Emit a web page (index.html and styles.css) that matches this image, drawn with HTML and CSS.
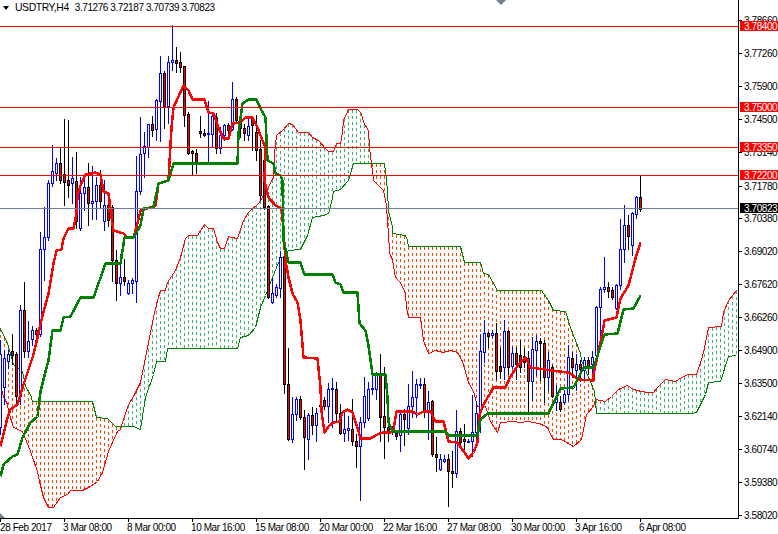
FILE: index.html
```html
<!DOCTYPE html>
<html lang="en">
<head>
<meta charset="utf-8">
<title>USDTRY,H4</title>
<link rel="stylesheet" href="styles.css">
</head>
<body>
<div class="terminal">
  <div class="plot">
    <svg id="chart" class="chart-svg" width="738" height="518" viewBox="0 0 738 518" aria-label="USDTRY H4 chart"></svg>
    <div class="legend">
      <span class="legend-arrow"></span>
      <span class="legend-symbol">USDTRY,H4</span>
      <span class="legend-ohlc">3.71276 3.72187 3.70739 3.70823</span>
    </div>
    <span class="shift-marker"></span>
    <span class="corner-marker"></span>
  </div>
  <svg class="price-axis" width="40" height="518" viewBox="738 0 40 518">
    <path class="axis-line" d="M738.5 0V518.5"/>
    <path class="axis-line" d="M739 20.5h3M739 53.5h3M739 86.5h3M739 119.5h3M739 152.5h3M739 186.5h3M739 218.5h3M739 251.5h3M739 284.5h3M739 317.5h3M739 350.5h3M739 383.5h3M739 416.5h3M739 449.5h3M739 482.5h3M739 515.5h3"/>
    <g class="axis-text">
      <text x="744" y="24">3.78660</text>
      <text x="744" y="57">3.77260</text>
      <text x="744" y="90">3.75900</text>
      <text x="744" y="123">3.74500</text>
      <text x="744" y="156">3.73140</text>
      <text x="744" y="190">3.71780</text>
      <text x="744" y="222">3.70380</text>
      <text x="744" y="255">3.69020</text>
      <text x="744" y="288">3.67620</text>
      <text x="744" y="321">3.66260</text>
      <text x="744" y="354">3.64900</text>
      <text x="744" y="387">3.63500</text>
      <text x="744" y="420">3.62140</text>
      <text x="744" y="453">3.60740</text>
      <text x="744" y="486">3.59380</text>
      <text x="744" y="519">3.58020</text>
    </g>
    <rect class="tag-red" x="740" y="21" width="38" height="10"/>
    <rect class="tag-red" x="740" y="102" width="38" height="10"/>
    <rect class="tag-red" x="740" y="142" width="38" height="10"/>
    <rect class="tag-red" x="740" y="170" width="38" height="10"/>
    <rect class="tag-black" x="740" y="203" width="38" height="10"/>
    <g class="tag-text">
      <text x="744" y="30">3.78400</text>
      <text x="744" y="111">3.75000</text>
      <text x="744" y="151">3.73350</text>
      <text x="744" y="179">3.72200</text>
      <text x="744" y="212">3.70823</text>
    </g>
  </svg>
  <svg class="time-axis" width="778" height="16" viewBox="0 518 778 16">
    <path class="axis-line" d="M0 518.5H739M0.5 518v4M64.5 518v4M128.5 518v4M192.5 518v4M256.5 518v4M320.5 518v4M384.5 518v4M448.5 518v4M512.5 518v4M576.5 518v4M640.5 518v4"/>
    <g class="axis-text">
      <text x="0" y="531">28 Feb 2017</text>
      <text x="63" y="531">3 Mar 08:00</text>
      <text x="127" y="531">8 Mar 00:00</text>
      <text x="191" y="531">10 Mar 16:00</text>
      <text x="255" y="531">15 Mar 08:00</text>
      <text x="319" y="531">20 Mar 00:00</text>
      <text x="383" y="531">22 Mar 16:00</text>
      <text x="447" y="531">27 Mar 08:00</text>
      <text x="511" y="531">30 Mar 00:00</text>
      <text x="575" y="531">3 Apr 16:00</text>
      <text x="639" y="531">6 Apr 08:00</text>
    </g>
  </svg>
</div>
<script src="chart.js"></script>
</body>
</html>
```
FILE: styles.css
```css
html, body {
  margin: 0;
  padding: 0;
  background: #ffffff;
}

.terminal {
  display: grid;
  grid-template-columns: 738px 40px;
  grid-template-rows: 518px 16px;
  width: 778px;
  height: 534px;
  overflow: hidden;
  font-family: "Liberation Sans", Arial, sans-serif;
  font-size: 10px;
  color: #000000;
}

.plot {
  position: relative;
  width: 738px;
  height: 518px;
}

.chart-svg,
.price-axis,
.time-axis {
  display: block;
}

.price-axis {
  overflow: visible;
}

.time-axis {
  grid-column: 1 / 3;
}

.legend {
  position: absolute;
  top: 1px;
  left: 3px;
  display: flex;
  align-items: center;
  gap: 6px;
  height: 14px;
  line-height: 14px;
  font-size: 10px;
  letter-spacing: -0.42px;
  white-space: nowrap;
}

.legend-arrow {
  width: 0;
  height: 0;
  border-left: 3.5px solid transparent;
  border-right: 3.5px solid transparent;
  border-top: 4px solid #000000;
}

.legend-symbol {
  font-size: 10.4px;
  letter-spacing: -0.4px;
}

.shift-marker {
  position: absolute;
  top: 0;
  left: 496px;
  width: 0;
  height: 0;
  border-left: 5px solid transparent;
  border-right: 5px solid transparent;
  border-top: 5px solid #708090;
}

.corner-marker {
  position: absolute;
  left: 0;
  bottom: 0;
  width: 0;
  height: 0;
  border-bottom: 5px solid #708090;
  border-right: 5px solid transparent;
}

.axis-line {
  fill: none;
  stroke: #000000;
  stroke-width: 1;
  shape-rendering: crispEdges;
}

.axis-text text {
  font-family: "Liberation Sans", Arial, sans-serif;
  font-size: 10px;
  letter-spacing: -0.42px;
  fill: #000000;
}

.tag-red {
  fill: #ff0000;
}

.tag-black {
  fill: #000000;
}

.tag-text text {
  font-family: "Liberation Sans", Arial, sans-serif;
  font-size: 10px;
  letter-spacing: -0.42px;
  fill: #ffffff;
}

.wick-up { stroke: #0000ff; stroke-width: 1; fill: none; shape-rendering: crispEdges; }
.wick-down { stroke: #000000; stroke-width: 1; fill: none; shape-rendering: crispEdges; }
.body-up { stroke: #0000ff; stroke-width: 1; fill: #ffffff; shape-rendering: crispEdges; }
.body-down { stroke: #000000; stroke-width: 1; fill: #ff0000; shape-rendering: crispEdges; }

.dash-orange { stroke: #ff4500; stroke-width: 1; fill: none; shape-rendering: crispEdges; }
.dash-green { stroke: #3cb371; stroke-width: 1; fill: none; shape-rendering: crispEdges; }

.span-a { stroke: #ff0000; stroke-width: 1; fill: none; shape-rendering: crispEdges; }
.span-b { stroke: #008000; stroke-width: 1; fill: none; shape-rendering: crispEdges; }
.tenkan { stroke: #ff0000; stroke-width: 2.5; fill: none; stroke-linejoin: round; shape-rendering: crispEdges; }
.kijun { stroke: #008000; stroke-width: 2.5; fill: none; stroke-linejoin: round; shape-rendering: crispEdges; }

.level { stroke: #ff0000; stroke-width: 1; shape-rendering: crispEdges; }
.bid { stroke: #708090; stroke-width: 1; shape-rendering: crispEdges; }
```
FILE: chart.js
```js
(function () {
var NS = "http://www.w3.org/2000/svg";
var chart = document.getElementById("chart");

// x, high, body top, body bottom, low, bullish (1) or bearish (0), in screen pixels
var candles = [
[0,340,354,427,434,1],[4,350,358,387,404,1],[8,350,354,361,368,1],[12,334,351,355,364,0],[16,352,354,396,404,0],
[20,305,310,396,404,1],[24,282,310,351,357,0],[28,321,341,351,357,1],[32,326,330,339,345,1],[36,328,330,334,343,0],
[40,232,249,334,336,1],[44,207,237,249,280,1],[48,180,183,237,240,1],[52,145,171,183,186,1],[56,158,163,173,180,1],
[60,148,163,180,183,0],[64,119,174,182,205,0],[68,120,180,185,197,0],[72,157,178,183,203,1],[76,152,181,221,228,0],
[80,177,193,228,230,1],[84,177,187,193,210,1],[88,163,187,203,225,0],[92,166,201,203,219,1],[96,177,185,201,219,1],
[100,170,185,201,207,0],[104,180,205,221,230,1],[108,197,205,220,226,0],[112,205,207,260,281,0],[116,250,260,283,300,0],
[120,254,277,283,295,1],[124,259,277,281,285,0],[128,280,283,293,294,1],[132,278,280,283,293,1],[136,156,191,281,302,1],
[140,117,154,191,194,1],[144,132,146,153,177,1],[148,124,124,147,157,1],[152,116,124,130,136,0],[156,99,100,129,140,1],
[160,56,73,101,141,1],[164,71,73,106,128,0],[168,56,62,106,123,1],[172,25,60,62,70,1],[176,47,60,63,72,0],
[180,52,62,67,72,0],[184,66,66,115,126,0],[188,112,114,153,154,0],[192,150,151,153,175,0],[196,149,153,162,173,0],
[200,116,131,133,137,0],[204,129,133,135,136,0],[208,101,133,134,163,1],[212,112,116,134,147,1],[216,113,117,148,153,0],
[220,127,135,148,153,1],[224,124,125,135,140,1],[228,123,125,130,133,0],[232,82,99,129,130,1],[236,97,99,120,122,0],
[240,118,123,128,137,0],[244,124,128,133,140,0],[248,117,126,135,140,1],[252,116,117,125,150,0],[256,115,132,150,160,0],
[260,140,149,195,200,0],[264,158,160,207,209,0],[268,205,206,297,298,0],[272,278,293,302,303,1],[276,284,287,295,297,1],
[280,251,257,288,297,1],[284,255,257,384,393,0],[288,348,384,439,440,0],[292,397,414,439,442,1],[296,397,399,414,420,1],
[300,396,399,417,419,0],[304,410,417,437,469,0],[308,413,415,439,459,1],[312,407,415,425,434,0],[316,408,413,425,441,1],
[320,397,405,406,410,0],[324,397,400,406,409,0],[328,383,389,406,422,1],[332,378,388,389,427,1],[336,382,389,413,421,0],
[340,404,413,433,434,0],[344,411,429,433,441,1],[348,416,428,430,440,1],[352,399,429,441,445,0],[356,434,441,446,467,0],
[360,417,422,446,500,1],[364,377,396,422,427,1],[368,382,389,418,420,1],[372,374,388,389,394,1],[376,372,374,389,399,1],
[380,354,374,417,441,0],[384,367,416,427,458,0],[388,411,427,430,441,0],[392,426,429,431,434,1],[396,430,433,436,439,0],
[400,411,414,435,451,1],[404,409,414,419,445,0],[408,384,406,428,434,1],[412,371,397,406,417,1],[416,379,384,397,417,1],
[420,378,384,385,388,1],[424,378,384,411,417,0],[428,391,402,411,439,1],[432,400,401,454,456,0],[436,437,454,457,471,0],
[440,454,459,469,470,1],[444,455,459,461,462,1],[448,454,459,471,506,0],[452,451,471,473,487,0],[456,410,431,473,477,1],
[460,428,431,442,448,0],[464,424,439,441,451,0],[468,439,441,442,442,1],[472,395,432,441,456,1],[476,401,413,432,447,1],
[480,334,351,412,432,1],[484,320,333,352,362,1],[488,332,333,336,347,0],[492,330,333,335,337,1],[496,323,333,371,379,0],
[500,348,366,371,378,0],[504,320,331,367,379,1],[508,330,331,367,374,0],[512,347,353,366,368,1],[516,347,353,364,379,0],
[520,340,355,367,372,0],[524,348,356,362,367,0],[528,351,358,381,412,0],[532,337,349,381,400,1],[536,335,341,350,375,1],
[540,338,341,343,380,0],[544,340,343,377,402,0],[548,352,360,377,390,1],[552,365,367,396,397,0],[556,385,398,402,410,1],
[560,396,402,409,411,0],[564,390,394,402,404,1],[568,345,357,394,400,1],[572,352,358,367,377,0],[576,354,364,370,390,1],
[580,360,364,369,381,0],[584,357,360,370,379,1],[588,357,360,367,374,0],[592,351,357,364,374,1],[596,306,307,355,362,1],
[600,287,289,307,337,1],[604,257,287,289,292,1],[608,282,287,291,297,0],[612,287,290,297,299,0],[616,284,285,308,309,1],
[620,219,249,285,289,1],[624,205,225,249,262,1],[628,215,225,236,249,0],[632,212,213,245,255,1],[636,196,197,214,218,1],
[640,176,197,209,211,0]
];

var spanA = [[0,385],[3,396],[7,404],[8,411],[13,427],[22,431],[30,451],[37,471],[39,481],[43,497],[48,507],[53,507],[60,497],[67,494],[70,490],[82,490],[90,486],[97,481],[102,472],[108,451],[112,442],[117,431],[120,429],[122,422],[128,404],[133,396],[140,382],[143,367],[147,347],[153,317],[157,300],[160,290],[165,290],[167,282],[175,270],[180,257],[185,238],[188,235],[197,235],[204,224],[208,228],[213,228],[217,242],[220,248],[224,248],[228,236],[231,237],[237,238],[243,220],[248,212],[258,203],[266,190],[273,177],[274,153],[276,135],[282,130],[288,123],[292,124],[298,132],[308,132],[312,137],[318,140],[325,148],[328,151],[333,151],[336,143],[340,143],[342,132],[343,120],[348,109],[357,109],[361,113],[363,122],[368,130],[369,147],[371,163],[373,180],[383,190],[386,205],[387,222],[388,232],[389,252],[392,260],[395,277],[400,282],[405,293],[406,307],[408,317],[420,317],[423,340],[428,353],[435,350],[443,352],[450,350],[457,352],[462,361],[468,382],[473,391],[477,406],[485,406],[490,421],[497,432],[500,422],[513,421],[520,422],[528,421],[538,423],[546,426],[553,439],[561,439],[573,446],[581,439],[586,414],[593,406],[595,399],[605,401],[611,396],[618,389],[627,385],[633,389],[641,391],[648,392],[653,392],[658,386],[665,379],[675,381],[681,377],[688,374],[696,374],[701,359],[703,352],[708,327],[721,326],[723,312],[728,300],[736,290]];

var spanB = [[0,328],[7,343],[13,364],[22,371],[25,386],[30,394],[32,401],[92,401],[96,417],[107,418],[115,426],[125,426],[133,426],[140,429],[145,397],[153,374],[156,361],[165,361],[167,348],[237,348],[240,337],[248,335],[255,327],[260,307],[265,295],[272,277],[278,262],[288,250],[300,249],[307,235],[312,217],[323,215],[328,213],[331,202],[333,191],[340,189],[348,180],[353,163],[384,163],[386,180],[387,190],[388,210],[392,227],[392,233],[405,235],[407,240],[408,246],[460,246],[464,262],[480,262],[483,273],[488,274],[497,290],[541,290],[548,300],[553,310],[565,311],[570,327],[575,340],[580,353],[581,360],[594,391],[596,413],[691,413],[696,412],[705,394],[708,382],[720,381],[728,356],[736,355]];

var tenkan = [[0,446],[7,417],[10,409],[17,404],[23,384],[33,354],[37,337],[42,315],[48,293],[53,263],[56,250],[61,249],[63,238],[68,228],[73,228],[76,213],[77,195],[80,185],[85,174],[95,172],[100,174],[103,191],[108,193],[111,217],[113,230],[123,233],[127,237],[133,237],[137,223],[140,210],[147,208],[155,205],[158,183],[168,180],[171,127],[173,107],[183,85],[188,90],[192,99],[204,99],[208,112],[213,113],[218,127],[223,138],[228,138],[232,123],[240,122],[245,117],[252,117],[257,127],[260,135],[265,147],[264,180],[268,197],[275,205],[281,208],[283,230],[285,260],[288,277],[292,293],[297,302],[300,320],[303,357],[317,358],[320,387],[321,411],[324,432],[328,426],[333,422],[339,421],[342,412],[347,409],[352,412],[357,427],[360,438],[370,438],[377,434],[382,432],[390,432],[393,429],[396,411],[412,411],[417,414],[423,411],[430,411],[435,421],[443,421],[448,441],[457,442],[468,458],[473,452],[477,442],[479,414],[483,404],[493,387],[505,387],[510,376],[518,364],[525,357],[530,367],[551,370],[568,372],[578,379],[593,380],[593,374],[596,360],[601,337],[604,320],[616,317],[620,298],[628,285],[635,258],[640,242]];

var kijun = [[0,476],[3,464],[12,456],[17,454],[22,437],[30,422],[37,416],[40,391],[45,371],[48,360],[52,330],[60,330],[63,317],[70,316],[80,297],[93,297],[105,263],[120,263],[124,237],[133,237],[140,225],[143,208],[153,207],[158,183],[168,180],[173,163],[237,163],[238,133],[242,103],[248,99],[256,99],[260,108],[265,117],[267,160],[273,163],[275,173],[280,175],[282,180],[283,240],[288,262],[300,262],[304,274],[332,274],[335,282],[340,284],[343,292],[357,292],[359,323],[365,330],[368,345],[372,374],[385,374],[387,397],[388,422],[392,431],[445,431],[448,435],[477,435],[480,419],[487,413],[548,413],[560,388],[573,387],[583,367],[593,367],[596,358],[604,334],[617,333],[623,309],[633,308],[640,295]];

function add(tag, cls, attrs) {
  var el = document.createElementNS(NS, tag);
  el.setAttribute("class", cls);
  for (var k in attrs) el.setAttribute(k, attrs[k]);
  chart.appendChild(el);
  return el;
}

function points(list) {
  return list.map(function (p) { return (p[0] + 0.5) + "," + (p[1] + 0.5); }).join(" ");
}

function at(list, x) {
  for (var i = 1; i < list.length; i++) {
    if (x <= list[i][0]) {
      var a = list[i - 1], b = list[i];
      if (b[0] === a[0]) return b[1];
      return a[1] + (b[1] - a[1]) * (x - a[0]) / (b[0] - a[0]);
    }
  }
  return list[list.length - 1][1];
}

// Cloud: a dashed column every 4px between the two spans
var orange = "", green = "";
for (var cx = 0; cx <= 736; cx += 4) {
  var spanAy = at(spanA, cx), spanBy = at(spanB, cx);
  var upper = Math.round(Math.min(spanAy, spanBy)), lower = Math.round(Math.max(spanAy, spanBy));
  var d = "";
  for (var y = upper + 1; y < lower; y += 6) {
    d += "M" + (cx + 0.5) + " " + y + "V" + Math.min(y + 3, lower);
  }
  if (spanBy < spanAy) orange += d; else green += d;
}
add("path", "dash-orange", { d: orange });
add("path", "dash-green", { d: green });
add("polyline", "span-a", { points: points(spanA) });
add("polyline", "span-b", { points: points(spanB) });

candles.forEach(function (c) {
  var x = c[0] + 0.5, up = c[5] === 1;
  add("path", up ? "wick-up" : "wick-down", { d: "M" + x + " " + c[1] + "V" + (c[4] + 1) });
  add("rect", up ? "body-up" : "body-down", {
    x: c[0] - 0.5,
    y: c[2] + 0.5,
    width: 2,
    height: Math.max(c[3] - c[2], 1)
  });
});

add("polyline", "tenkan", { points: points(tenkan) });
add("polyline", "kijun", { points: points(kijun) });

[26, 107, 147, 175].forEach(function (y) {
  add("line", "level", { x1: 0, x2: 738, y1: y + 0.5, y2: y + 0.5 });
});
add("line", "bid", { x1: 0, x2: 738, y1: 208.5, y2: 208.5 });
})();
```
